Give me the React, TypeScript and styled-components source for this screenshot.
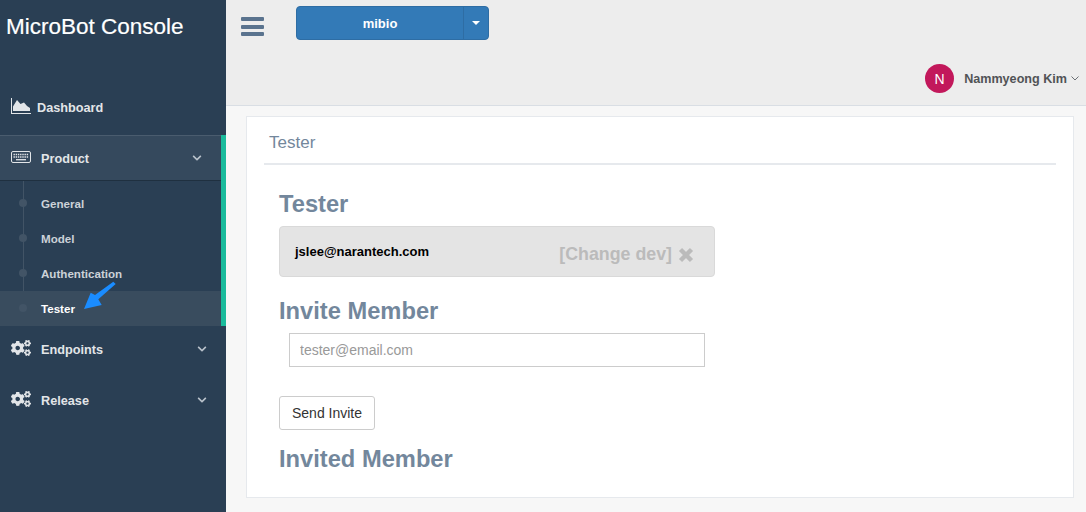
import React from "react";
import styled, { createGlobalStyle } from "styled-components";
import { FaCogs, FaChevronDown } from "react-icons/fa";

const Global = createGlobalStyle`
  html, body { margin: 0; padding: 0; background: #f7f7f7; overflow: hidden; }
  * { box-sizing: border-box; }
  body { font-family: "Liberation Sans", Arial, sans-serif; }
`;

const Shell = styled.div`
  display: flex;
  width: 1086px;
  height: 512px;
  position: relative;
  overflow: hidden;
`;

const Sidebar = styled.aside`
  width: 226px;
  flex: none;
  background: #2a3f54;
  color: #e7e7e7;
  display: flex;
  flex-direction: column;
`;

const Brand = styled.div`
  height: 82px;
  padding: 14px 0 0 6px;
  font-size: 22.5px;
  line-height: 26px;
  color: #fff;
  -webkit-text-stroke: 0.2px #fff;
`;

const NavRow = styled.div<{ $h?: number; $after?: number }>`
  height: ${(p) => p.$h ?? 46}px;
  margin-bottom: ${(p) => p.$after ?? 0}px;
  display: flex;
  align-items: center;
  padding-left: 11px;
  padding-right: 19px;
  font-size: 12.7px;
  font-weight: 700;
  color: #e2e5e8;
  flex: none;
  svg { flex: none; }
`;

const DashRow = styled(NavRow)`
  padding-bottom: 3px;
  height: 53px;
  gap: 6px;
`;

const DashIcon = styled.svg`
  margin-top: -2px;
`;

const NavIcon = styled.span<{ $lift?: number }>`
  width: 30px;
  display: flex;
  align-items: center;
  flex: none;
  color: #e2e5e8;
  margin-top: ${(p) => p.$lift ?? 0}px;
`;

const NavLabel = styled.span<{ $grow?: boolean }>`
  flex: ${(p) => (p.$grow === false ? "none" : 1)};
  padding-top: 2px;
`;

const Chevron = styled(FaChevronDown)`
  color: #b9c2cb;
  font-size: 10px;
`;

const ActiveSection = styled.section`
  border-right: 5px solid #1abb9c;
  flex: none;
`;

const ProductRow = styled(NavRow)`
  background: #35495d;
  border-top: 1px solid #4a5c6e;
  border-bottom: 1px solid #1f3040;
`;

const SubMenu = styled.ul`
  list-style: none;
  margin: 0;
  padding: 5px 0 0;
  position: relative;
  &::before {
    content: "";
    position: absolute;
    left: 23px;
    top: 0;
    bottom: 10px;
    width: 1px;
    background: #425466;
  }
`;

const SubItem = styled.li<{ $active?: boolean }>`
  height: 35px;
  display: flex;
  align-items: center;
  padding-left: 41px;
  font-size: 11.6px;
  font-weight: 700;
  position: relative;
  color: ${(p) => (p.$active ? "#ffffff" : "#ccd2d8")};
  background: ${(p) => (p.$active ? "#394c5e" : "transparent")};
  &::before {
    content: "";
    position: absolute;
    left: 19px;
    top: 13px;
    width: 8px;
    height: 8px;
    border-radius: 50%;
    background: #425466;
  }
`;

const Main = styled.main`
  flex: 1;
  display: flex;
  flex-direction: column;
  min-width: 0;
`;

const TopBar = styled.header`
  height: 106px;
  flex: none;
  background: #ededed;
  border-bottom: 1px solid #d9dee4;
  display: flex;
  flex-direction: column;
`;

const TopRow = styled.div`
  height: 64px;
  flex: none;
  display: flex;
  align-items: flex-start;
  padding: 6px 0 0 15px;
`;

const Burger = styled.svg`
  margin-top: 11px;
  margin-right: 32px;
  flex: none;
`;

const SplitButton = styled.div`
  width: 193px;
  height: 34px;
  display: flex;
  background: #337ab7;
  border: 1px solid #2e6da4;
  border-radius: 4px;
  color: #fff;
  font-size: 13px;
  font-weight: 700;
`;

const SplitMain = styled.div`
  flex: 1;
  display: flex;
  align-items: center;
  justify-content: center;
  border-right: 1px solid #2e6da4;
`;

const SplitCaret = styled.div`
  width: 24px;
  display: flex;
  align-items: center;
  justify-content: center;
  &::before {
    content: "";
    border-top: 4px solid #fff;
    border-left: 4px solid transparent;
    border-right: 4px solid transparent;
  }
`;

const UserRow = styled.div`
  display: flex;
  justify-content: flex-end;
  align-items: center;
  padding-right: 7px;
  height: 29px;
`;

const Avatar = styled.div`
  width: 29px;
  height: 29px;
  border-radius: 50%;
  background: #c2185b;
  color: #fff;
  display: flex;
  align-items: center;
  justify-content: center;
  font-size: 14px;
  margin-right: 10px;
`;

const UserName = styled.span`
  font-size: 12.6px;
  font-weight: 700;
  color: #515356;
  margin-right: 4px;
`;

const Content = styled.div`
  flex: 1;
  padding: 10px 12px 14px 20px;
  display: flex;
  background: #f7f7f7;
`;

const Panel = styled.div`
  flex: 1;
  background: #fff;
  border: 1px solid #e6e9ed;
  padding: 0 17px;
`;

const PanelTitle = styled.div`
  height: 48px;
  border-bottom: 2px solid #e6e9ed;
  padding: 17px 0 0 5px;
  font-size: 17px;
  line-height: 18px;
  color: #73879c;
`;

const Body = styled.div`
  padding: 25px 0 0 15px;
`;

const Heading = styled.h3<{ $top?: number }>`
  margin: ${(p) => p.$top ?? 0}px 0 0;
  font-size: 23.7px;
  line-height: 28px;
  font-weight: 700;
  color: #73879c;
`;

const TesterBox = styled.div`
  width: 436px;
  height: 51px;
  margin-top: 8px;
  background: #e4e4e4;
  border: 1px solid #d9d9d9;
  border-radius: 4px;
  display: flex;
  align-items: center;
  justify-content: space-between;
  padding: 0 20px 0 15px;
`;

const Email = styled.span`
  font-size: 13px;
  font-weight: 700;
  color: #000;
  margin-top: -1px;
`;

const ChangeDev = styled.span`
  font-size: 17.8px;
  font-weight: 700;
  color: #bbbbbb;
  display: flex;
  align-items: center;
  gap: 6px;
  margin-top: 6px;
`;

const EmailInput = styled.input`
  display: block;
  width: 416px;
  height: 34px;
  margin: 8px 0 0 10px;
  padding: 0 10px;
  border: 1px solid #ccc;
  background: #fff;
  font-family: inherit;
  font-size: 14px;
  &::placeholder { color: #999; opacity: 1; }
`;

const SendButton = styled.button`
  display: block;
  width: 96px;
  height: 34px;
  margin-top: 29px;
  padding: 0;
  background: #fff;
  border: 1px solid #ccc;
  border-radius: 3px;
  color: #333;
  font-family: inherit;
  font-size: 14px;
`;

const Pointer = styled.svg`
  position: absolute;
  left: 80px;
  top: 278px;
`;

const AreaIcon = () => (
  <DashIcon width="20" height="16" viewBox="0 0 20 16" fill="#e2e5e8">
    <path d="M0 0H1V15H20V16H0Z" />
    <path d="M2 13V8.5L6 2L9.5 6L13 4.5L16 8L19 10V13Z" />
  </DashIcon>
);

const KeyboardIcon = () => (
  <svg width="20" height="12" viewBox="0 0 20 12" fill="none" stroke="#e2e5e8">
    <rect x="0.5" y="0.5" width="19" height="11" rx="1.5" />
    <path d="M2.5 3.5H17.5M2.5 6H17.5" strokeDasharray="1.4 0.8" strokeWidth="1.3" />
    <path d="M5 8.7H15" strokeWidth="1.3" />
  </svg>
);

const CrossIcon = () => (
  <svg width="16" height="16" viewBox="0 0 16 16" fill="none" stroke="#bbbbbb" strokeWidth="4.4">
    <path d="M2.5 2.5L13.5 13.5M13.5 2.5L2.5 13.5" />
  </svg>
);

export default function App() {
  return (
    <Shell>
      <Global />
      <Sidebar>
        <Brand>MicroBot Console</Brand>
        <DashRow>
          <AreaIcon />
          <NavLabel $grow={false}>Dashboard</NavLabel>
        </DashRow>
        <ActiveSection>
          <ProductRow>
            <NavIcon $lift={-2}><KeyboardIcon /></NavIcon>
            <NavLabel>Product</NavLabel>
            <Chevron />
          </ProductRow>
          <SubMenu>
            <SubItem>General</SubItem>
            <SubItem>Model</SubItem>
            <SubItem>Authentication</SubItem>
            <SubItem $active>Tester</SubItem>
          </SubMenu>
        </ActiveSection>
        <NavRow $after={5}>
          <NavIcon $lift={-3}><FaCogs size={20} /></NavIcon>
          <NavLabel>Endpoints</NavLabel>
          <Chevron />
        </NavRow>
        <NavRow>
          <NavIcon $lift={-3}><FaCogs size={20} /></NavIcon>
          <NavLabel>Release</NavLabel>
          <Chevron />
        </NavRow>
      </Sidebar>
      <Main>
        <TopBar>
          <TopRow>
            <Burger width="23" height="19" viewBox="0 0 23 19" fill="#5a738e">
              <rect width="23" height="4" rx="1" />
              <rect y="8" width="23" height="4" rx="1" />
              <rect y="15" width="23" height="4" rx="1" />
            </Burger>
            <SplitButton>
              <SplitMain>mibio</SplitMain>
              <SplitCaret />
            </SplitButton>
          </TopRow>
          <UserRow>
            <Avatar>N</Avatar>
            <UserName>Nammyeong Kim</UserName>
            <svg width="8" height="5" viewBox="0 0 8 5" fill="none" stroke="#6b7075" strokeWidth="1">
              <path d="M0.5 0.5 L4 4 L7.5 0.5" />
            </svg>
          </UserRow>
        </TopBar>
        <Content>
          <Panel>
            <PanelTitle>Tester</PanelTitle>
            <Body>
              <Heading>Tester</Heading>
              <TesterBox>
                <Email>jslee@narantech.com</Email>
                <ChangeDev>[Change dev] <CrossIcon /></ChangeDev>
              </TesterBox>
              <Heading $top={20}>Invite Member</Heading>
              <EmailInput placeholder="tester@email.com" />
              <SendButton>Send Invite</SendButton>
              <Heading $top={15}>Invited Member</Heading>
            </Body>
          </Panel>
        </Content>
      </Main>
      <Pointer width="40" height="36" viewBox="0 0 40 36">
        <path d="M33.3 3.7L15 17L10.7 14.7L4 31L21.7 27L18.3 21.3L35.7 6Z" fill="#1a8cff" />
      </Pointer>
    </Shell>
  );
}
